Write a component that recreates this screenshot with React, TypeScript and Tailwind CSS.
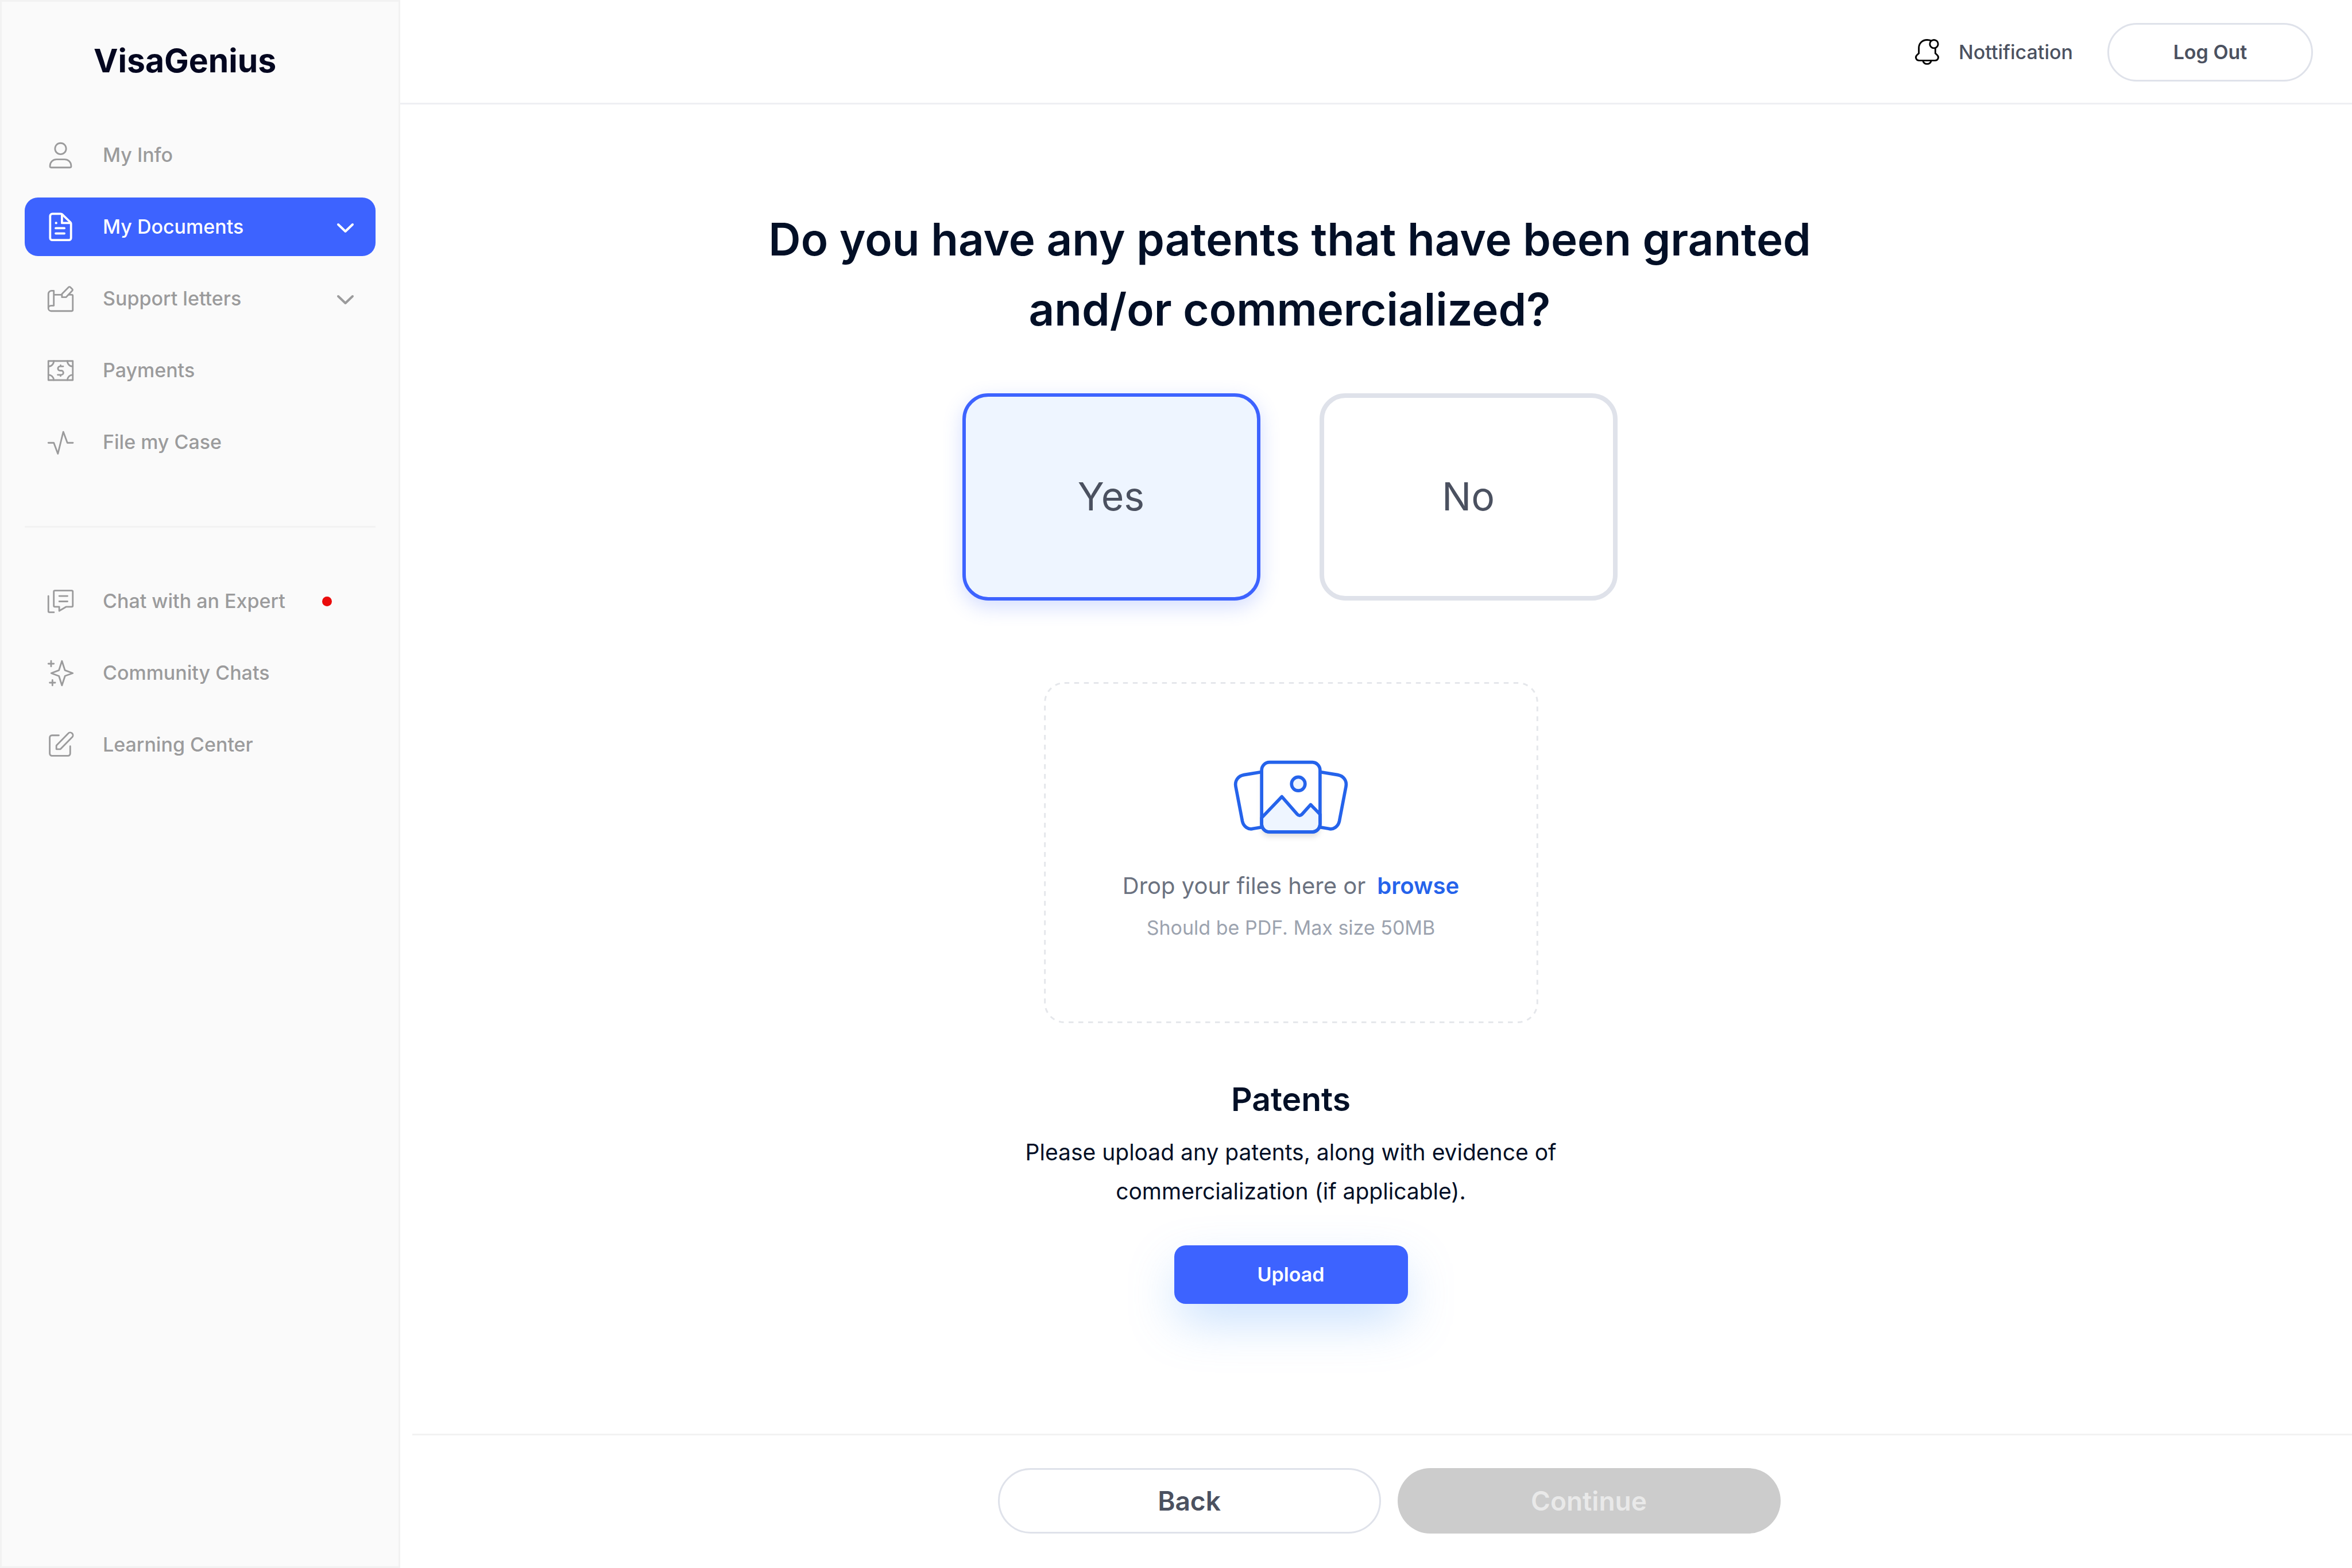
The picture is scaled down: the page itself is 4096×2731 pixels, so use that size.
import type { ReactNode } from "react";

function NavIcon({ children, stroke = 12 }: { children: ReactNode; stroke?: number }) {
  return (
    <svg
      className="size-[51px] shrink-0"
      viewBox="36 18 216 216"
      fill="none"
      stroke="currentColor"
      strokeWidth={stroke}
      strokeLinecap="round"
      strokeLinejoin="round"
      aria-hidden="true"
    >
      {children}
    </svg>
  );
}

const UserIcon = () => (
  <NavIcon>
    <circle cx="144" cy="77" r="41" />
    <path d="M66 204C66 175 88 156 114 156H174C200 156 222 175 222 204V208a8 8 0 0 1-8 8H74a8 8 0 0 1-8-8Z" />
  </NavIcon>
);

const DocumentIcon = () => (
  <NavIcon stroke={16}>
    <path d="M83 28H146Q152 28 156 32L217 91Q221 95 221 101V206a16 16 0 0 1-16 16H83a16 16 0 0 1-16-16V44a16 16 0 0 1 16-16Z" />
    <path d="M154 32V96H219M108 134H172M108 173H172" />
    <circle cx="111" cy="96" r="9" fill="currentColor" stroke="none" />
  </NavIcon>
);

const LettersIcon = () => (
  <NavIcon>
    <path d="M54 196V90a24 24 0 0 1 24-24H94V176H74a20 20 0 0 0-20 20a20 20 0 0 0 20 20H226a8 8 0 0 0 8-8V104a8 8 0 0 0-8-8H205M94 96H150" />
    <path d="M154 90L202 41a10 10 0 0 1 15 0L230 54a8 8 0 0 1 0 12L184 114H154Z" />
  </NavIcon>
);

const PaymentsIcon = () => (
  <NavIcon>
    <rect x="54" y="55" width="180" height="141" />
    <path d="M94 55a40 40 0 0 1-40 40M194 55a40 40 0 0 0 40 40M54 157a40 40 0 0 1 40 39M234 157a40 40 0 0 0-40 39" />
    <path d="M163 95H140a15.500 15.500 0 0 0 0 31h9a15.500 15.500 0 0 1 0 31H123M144 86v9M144 157v9" />
  </NavIcon>
);

const PulseIcon = () => (
  <NavIcon>
    <path d="M54 129H94L124 210L164 48L194 129H235" />
  </NavIcon>
);

const ChatIcon = () => (
  <NavIcon>
    <path d="M102 46H226a8 8 0 0 1 8 8V158a8 8 0 0 1-8 8H184L134 196V166H102a8 8 0 0 1-8-8V54a8 8 0 0 1 8-8Z" />
    <path d="M134 86H195M134 126H195M54 86V198a8 8 0 0 0 8 8H95" />
  </NavIcon>
);

const SparkleIcon = () => (
  <NavIcon>
    <path d="M154 36L176 104L234 126L177 146L154 216L132 147L75 126L132 104Z" />
    <path d="M74 36v40M54 56h40M84 176v40M64 196h40" />
  </NavIcon>
);

const EditIcon = () => (
  <NavIcon>
    <path d="M131 55H80a16 16 0 0 0-16 16V190a16 16 0 0 0 16 16H199a16 16 0 0 0 16-16V135" />
    <path d="M113 157V130L200 41a20 20 0 0 1 30 27L143 157Z" />
  </NavIcon>
);

const ChevronIcon = () => (
  <svg className="h-[18px] w-[31px] shrink-0" viewBox="0 0 31 18" fill="none" stroke="currentColor" strokeWidth="4" strokeLinecap="round" strokeLinejoin="round" aria-hidden="true">
    <path d="M3 3L15.500 15L28 3" />
  </svg>
);

const BellIcon = () => (
  <svg className="size-[46px] shrink-0 text-black" viewBox="57 54 192 192" fill="none" stroke="currentColor" strokeWidth="12" aria-hidden="true">
    <path d="M182 66Q170 60 153 60C118 60 93 86 93 118V158L79 171C64 186 73 210 95 210H211C233 210 242 186 227 171L213 158V119" />
    <circle cx="203" cy="90" r="30" />
    <path d="M123 212a31 31 0 0 0 60 0" />
  </svg>
);

const PicturesIcon = () => (
  <svg className="h-[149px] w-[202px]" viewBox="60 120 852 630" fill="none" stroke="#2563eb" strokeWidth="24" strokeLinejoin="round" aria-hidden="true">
    <defs>
      <filter id="card-shadow" x="-30%" y="-30%" width="160%" height="160%">
        <feDropShadow dx="0" dy="36" stdDeviation="20" floodColor="#000" floodOpacity="0.12" />
      </filter>
    </defs>
    <path d="M271 215L140 237C98 245 72 280 80 322L129 578C138 617 172 642 208 633L271 622" />
    <path d="M701 215L832 237C874 245 900 280 892 322L843 578C834 617 800 642 764 633L701 622" />
    <rect x="271" y="144" width="430" height="513" rx="58" fill="#fff" stroke="none" filter="url(#card-shadow)" />
    <path d="M271 553L420 397L533 526Q551 546 569 526L632 456L701 527V599a58 58 0 0 1-58 58H329a58 58 0 0 1-58-58Z" fill="#eef5ff" />
    <rect x="271" y="144" width="430" height="513" rx="58" />
    <circle cx="541" cy="303" r="50" fill="#eef5ff" />
  </svg>
);

function NavItem({
  icon,
  label,
  active = false,
  chevron = false,
  unread = false,
}: {
  icon: ReactNode;
  label: string;
  active?: boolean;
  chevron?: boolean;
  unread?: boolean;
}) {
  return (
    <li>
      <a
        href="#"
        aria-current={active ? "page" : undefined}
        className={
          active
            ? "flex h-[102px] items-center rounded-[23px] bg-[#3d63ff] pr-[37px] pl-[37px] text-white"
            : "flex h-[102px] items-center rounded-[23px] pr-[37px] pl-[37px] text-[#9b9b9c]"
        }
      >
        {icon}
        <span className="ml-12 text-[34px] leading-[40px] font-medium whitespace-nowrap">{label}</span>
        {unread && <span className="ml-16 size-[17px] rounded-full bg-[#ea0c0c]" />}
        {chevron && (
          <span className="ml-auto pt-1">
            <ChevronIcon />
          </span>
        )}
      </a>
    </li>
  );
}

function Sidebar() {
  return (
    <aside className="w-[697px] shrink-0 border-3 border-[#f2f2f2] bg-[#fafafa] px-10 pt-[69px]">
      <p className="mb-[79px] pl-[120px] text-[57px] leading-[68px] font-bold text-[#040720]">VisaGenius</p>
      <nav aria-label="Main">
        <ul className="flex flex-col gap-[23px]">
          <NavItem icon={<UserIcon />} label="My Info" />
          <NavItem icon={<DocumentIcon />} label="My Documents" active chevron />
          <NavItem icon={<LettersIcon />} label="Support letters" chevron />
          <NavItem icon={<PaymentsIcon />} label="Payments" />
          <NavItem icon={<PulseIcon />} label="File my Case" />
        </ul>
        <hr className="mt-[95px] mb-[77px] border-t-3 border-[#f2f2f2]" />
        <ul className="flex flex-col gap-[23px]">
          <NavItem icon={<ChatIcon />} label="Chat with an Expert" unread />
          <NavItem icon={<SparkleIcon />} label="Community Chats" />
          <NavItem icon={<EditIcon />} label="Learning Center" />
        </ul>
      </nav>
    </aside>
  );
}

function TopBar() {
  return (
    <header className="flex items-center justify-end border-b-3 border-[#eeeff3] pt-10 pr-[68px] pb-[37px] text-[34px] leading-[40px] text-[#4b5160]">
      <button type="button" className="mr-[60px] flex items-center gap-8 font-medium">
        <BellIcon />
        Nottification
      </button>
      <button type="button" className="h-[102px] w-[358px] rounded-full border-3 border-[#dfe2ea] font-semibold">
        Log Out
      </button>
    </header>
  );
}

function DropZone() {
  return (
    <section aria-label="File upload" className="relative mt-[142px] flex h-[594px] w-[861px] flex-col items-center pt-[134px]">
      <svg className="pointer-events-none absolute inset-0 size-full overflow-visible" fill="none" aria-hidden="true">
        <rect x="0.2%" y="0.25%" width="99.6%" height="99.5%" rx="34" stroke="#e5e7eb" strokeWidth="3" strokeDasharray="8.500 8.500" />
      </svg>
      <PicturesIcon />
      <p className="mt-12 flex gap-5 text-[40px] leading-[48px] text-[#6b7280]">
        Drop your files here or
        <button type="button" className="font-semibold text-[#2563eb]">
          browse
        </button>
      </p>
      <p className="mt-[29px] text-[34px] leading-[40px] text-[#9ca3af]">Should be PDF. Max size 50MB</p>
    </section>
  );
}

export default function App() {
  return (
    <div className="flex min-h-screen bg-white font-['Inter',sans-serif]">
      <Sidebar />
      <div className="flex min-w-0 flex-1 flex-col">
        <TopBar />
        <main className="flex flex-col items-center pt-[174px] pr-[297px] text-[#020f26]">
          <h1 className="pr-1 text-center text-[78px] leading-[122px] font-semibold">
            Do you have any patents that have been granted
            <br />
            and/or commercialized?
          </h1>
          <div className="mt-[85px] flex gap-[103px] pr-1 text-[68px] leading-[82px] text-[#4b5160]">
            <button type="button" aria-pressed="true" className="h-[361px] w-[519px] rounded-[45px] border-6 border-[#3d63ff] bg-[#eef5ff] pb-1 shadow-[0_11px_34px_rgba(61,99,255,0.22)]">
              Yes
            </button>
            <button type="button" aria-pressed="false" className="h-[361px] w-[519px] rounded-[45px] border-8 border-[#dfe2ea] pb-1">
              No
            </button>
          </div>
          <DropZone />
          <h2 className="mt-[99px] text-[57px] leading-[68px] font-semibold">Patents</h2>
          <p className="mt-6 text-center text-[39px] leading-[68px]">
            Please upload any patents, along with evidence of
            <br />
            commercialization (if applicable).
          </p>
          <button type="button" className="mt-[60px] h-[102px] w-[407px] rounded-[20px] bg-[#3d63ff] text-[34px] leading-[40px] font-semibold text-white shadow-[0_34px_85px_-8px_rgba(96,165,250,0.38)]">
            Upload
          </button>
        </main>
        <footer className="mt-auto ml-[21px] flex justify-center gap-[29px] border-t-3 border-[#f2f2f2] pt-[57px] pb-[60px] pl-6 text-[46px] leading-[56px] font-semibold">
          <button type="button" className="h-[114px] w-[667px] rounded-full border-3 border-[#dfe2ea] text-[#4b5160]">
            Back
          </button>
          <button type="button" disabled className="h-[114px] w-[667px] rounded-full bg-[#cccccc] text-[#e9e9e9]">
            Continue
          </button>
        </footer>
      </div>
    </div>
  );
}
